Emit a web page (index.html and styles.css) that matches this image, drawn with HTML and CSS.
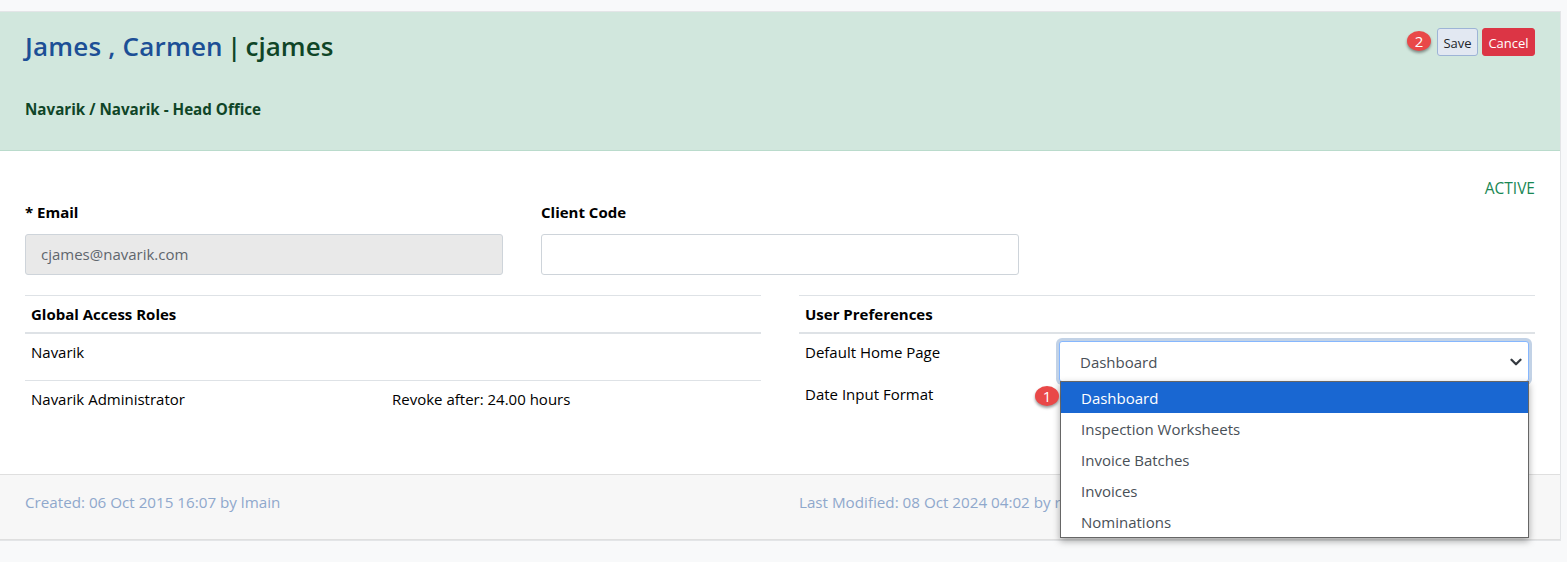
FILE: index.html
```html
<!DOCTYPE html>
<html lang="en">
<head>
    <meta charset="UTF-8">
    <meta name="viewport" content="width=device-width, initial-scale=1.0">
    <title>James , Carmen | cjames</title>
    <link rel="stylesheet" href="styles.css">
</head>
<body>
    <div class="card">
        <div class="card-header">
            <div class="header-top">
                <h1 class="user-title"><span class="user-name">James , Carmen</span> | cjames</h1>
                <div class="header-actions">
                    <div class="step-badge step-badge-2">2</div>
                    <button class="btn btn-save">Save</button>
                    <button class="btn btn-cancel">Cancel</button>
                </div>
            </div>
            <div class="org-line">Navarik / Navarik - Head Office</div>
        </div>

        <div class="card-body">
            <div class="status">ACTIVE</div>

            <div class="form-row">
                <div class="form-field">
                    <label class="field-label">* Email</label>
                    <div class="input input-disabled">cjames@navarik.com</div>
                </div>
                <div class="form-field">
                    <label class="field-label">Client Code</label>
                    <div class="input"></div>
                </div>
            </div>

            <div class="panels">
                <table class="panel-table">
                    <thead>
                        <tr><th colspan="2">Global Access Roles</th></tr>
                    </thead>
                    <tbody>
                        <tr class="row-group"><td colspan="2">Navarik</td></tr>
                        <tr class="row-role">
                            <td class="role-name">Navarik Administrator</td>
                            <td>Revoke after: 24.00 hours</td>
                        </tr>
                    </tbody>
                </table>

                <div class="prefs">
                    <div class="prefs-head">User Preferences</div>
                    <div class="pref-row">
                        <div class="pref-label">Default Home Page</div>
                        <div class="select-wrap">
                            <div class="select">
                                Dashboard
                                <svg class="chevron" width="12" height="12" viewBox="0 0 16 16"><path d="M2 5l6 6 6-6" fill="none" stroke="#343a40" stroke-width="3" stroke-linecap="round" stroke-linejoin="round"/></svg>
                            </div>
                            <div class="step-badge step-badge-1">1</div>
                            <ul class="select-menu">
                                <li class="selected">Dashboard</li>
                                <li>Inspection Worksheets</li>
                                <li>Invoice Batches</li>
                                <li>Invoices</li>
                                <li>Nominations</li>
                            </ul>
                        </div>
                    </div>
                    <div class="pref-row-plain">Date Input Format</div>
                </div>
            </div>
        </div>

        <div class="card-footer">
            <div class="footer-cell">Created: 06 Oct 2015 16:07 by lmain</div>
            <div class="footer-cell">Last Modified: 08 Oct 2024 04:02 by r</div>
        </div>
    </div>
</body>
</html>
```

FILE: styles.css
```css
body {
    margin: 0;
    height: 562px;
    overflow: hidden;
    padding: 12px 7px 0 0;
    box-sizing: border-box;
    background: #f8f9fa;
    font-family: "Open Sans", "Noto Sans", sans-serif;
    font-size: 15px;
    color: #212529;
}

.card {
    height: 528px;
    display: flex;
    flex-direction: column;
    background: #fff;
    box-shadow: 0 0 0 1px #e3e5e7;
}

.card-header {
    height: 139px;
    box-sizing: border-box;
    padding: 15px 25px 0;
    background: #d1e7dd;
    border-bottom: 1px solid #badbcc;
    color: #0f4527;
}

.header-top {
    display: flex;
    justify-content: space-between;
    align-items: flex-start;
}

.user-title {
    margin: 0;
    font-size: 26px;
    line-height: 38px;
    font-weight: 600;
    word-spacing: -2.5px;
}

.user-name {
    color: #1c4f96;
    letter-spacing: 0.2px;
    word-spacing: 0;
}

.header-actions {
    display: flex;
    align-items: center;
    gap: 4px;
    margin-top: 1px;
    position: relative;
}

.btn {
    height: 28px;
    padding: 2px 2px 0;
    border-radius: 3px;
    font-family: inherit;
    font-size: 13px;
}

.btn-save {
    width: 41px;
    background: #e2e8f2;
    border: 1px solid #9db4d6;
    color: #212529;
}

.btn-cancel {
    width: 53px;
    background: #dc3545;
    border: 1px solid #dc3545;
    color: #fff;
}

.step-badge {
    position: absolute;
    width: 24px;
    height: 20px;
    border-radius: 50%;
    background: #e94848;
    color: #fff;
    font-size: 15px;
    line-height: 20px;
    text-align: center;
    box-shadow: 0 2px 3px rgba(0, 0, 0, 0.4);
}

.step-badge-2 {
    left: -30px;
    top: 3px;
}

.step-badge-1 {
    left: -24px;
    top: 45px;
    z-index: 3;
}

.org-line {
    margin-top: 33px;
    font-size: 15.2px;
    font-weight: 700;
    line-height: 22px;
}

.card-body {
    flex: 1;
    padding: 27px 25px 0;
    position: relative;
}

.status {
    text-align: right;
    color: #198754;
    font-size: 15.5px;
    line-height: 20px;
}

.form-row {
    display: flex;
    gap: 38px;
    margin-top: 4px;
}

.form-field {
    width: 478px;
}

.field-label {
    display: block;
    height: 32px;
    font-weight: 700;
    line-height: 20px;
    color: #000;
}

.input {
    height: 41px;
    box-sizing: border-box;
    padding: 0 15px;
    border: 1px solid #ced4da;
    border-radius: 3px;
    background: #fff;
    line-height: 39px;
    color: #495057;
}

.input-disabled {
    background: #e9e9e9;
    color: #5f666d;
}

.panels {
    display: flex;
    gap: 38px;
    margin-top: 20px;
    color: #000;
}

.panel-table {
    flex: 1;
    width: 736px;
    height: 105px;
    border-collapse: collapse;
    border-top: 1px solid #dee2e6;
}

.panel-table th {
    height: 36px;
    padding: 0 6px;
    text-align: left;
    border-bottom: 2px solid #dee2e6;
}

.panel-table td {
    padding: 0 6px;
}

.row-group td {
    height: 47px;
    padding-bottom: 9px;
    box-sizing: border-box;
    border-bottom: 1px solid #dee2e6;
}

.row-role td {
    vertical-align: middle;
    height: 37px;
}

.role-name {
    width: 349px;
}

.prefs {
    width: 736px;
}

.prefs-head {
    height: 39px;
    box-sizing: border-box;
    padding: 0 6px;
    line-height: 37px;
    font-weight: 700;
    border-top: 1px solid #dee2e6;
    border-bottom: 2px solid #dee2e6;
}

.pref-row {
    display: flex;
    padding: 7px 6px 0;
}

.pref-label {
    width: 254px;
    line-height: 22px;
}

.pref-row-plain {
    padding: 1px 6px 0;
    line-height: 22px;
}

.select-wrap {
    width: 470px;
    position: relative;
}

.select {
    height: 41px;
    box-sizing: border-box;
    padding: 0 6px 0 20px;
    display: flex;
    align-items: center;
    justify-content: space-between;
    border: 1px solid #86b7fe;
    border-radius: 3px;
    background: #fff;
    box-shadow: 0 0 0 3px #c2d2e6;
    color: #495057;
}

.select-menu {
    position: absolute;
    top: 40px;
    left: 1px;
    right: 0;
    z-index: 2;
    margin: 0;
    padding: 0;
    list-style: none;
    background: #fff;
    border: 1px solid #666;
    box-shadow: 0 3px 7px rgba(0, 0, 0, 0.35);
    color: #495057;
}

.select-menu li {
    height: 31px;
    padding-left: 20px;
    line-height: 32px;
}

.select-menu .selected {
    background: #1967d2;
    color: #fff;
}

.card-footer {
    height: 66px;
    box-sizing: border-box;
    display: flex;
    gap: 38px;
    padding: 0 25px 10px;
    align-items: center;
    background: #f7f7f7;
    border-top: 1px solid #dfdfdf;
    border-bottom: 1px solid #dfdfdf;
    font-size: 15.2px;
    color: #8fa8cc;
}

.footer-cell {
    width: 736px;
}
```
